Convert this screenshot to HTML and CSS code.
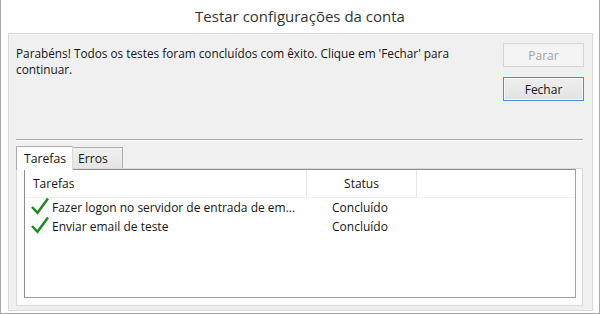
FILE: index.html
```html
<!DOCTYPE html>
<html lang="pt">
<head>
<meta charset="utf-8">
<title>Testar configurações da conta</title>
<link rel="stylesheet" href="styles.css">
</head>
<body>
<div class="window">
  <div class="title">Testar configurações da conta</div>
  <div class="panel">
    <div class="top">
      <p class="message">Parabéns! Todos os testes foram concluídos com êxito. Clique em 'Fechar' para continuar.</p>
      <div class="buttons">
        <button class="btn btn-disabled" disabled>Parar</button>
        <button class="btn btn-default">Fechar</button>
      </div>
    </div>
    <div class="separator"></div>
    <div class="tabs">
      <div class="tab tab-active">Tarefas</div>
      <div class="tab">Erros</div>
    </div>
    <div class="tabpage">
      <div class="listbox">
        <div class="header">
          <div class="col col-task">Tarefas</div>
          <div class="col col-status">Status</div>
          <div class="col col-rest"></div>
        </div>
        <div class="row">
          <div class="cell cell-task">
            <svg class="check" width="18" height="18" viewBox="0 0 18 18"><path d="M1 10 L6.5 15.8 L17 1.5" fill="none" stroke="#1f8a1f" stroke-width="2.5" stroke-linejoin="miter" stroke-linecap="butt"/></svg>
            <span>Fazer logon no servidor de entrada de em...</span>
          </div>
          <div class="cell cell-status">Concluído</div>
        </div>
        <div class="row">
          <div class="cell cell-task">
            <svg class="check" width="18" height="18" viewBox="0 0 18 18"><path d="M1 10 L6.5 15.8 L17 1.5" fill="none" stroke="#1f8a1f" stroke-width="2.5" stroke-linejoin="miter" stroke-linecap="butt"/></svg>
            <span>Enviar email de teste</span>
          </div>
          <div class="cell cell-status">Concluído</div>
        </div>
      </div>
    </div>
  </div>
</div>
</body>
</html>
```

FILE: styles.css
```css
* { box-sizing: border-box; }
html, body { margin: 0; padding: 0; background: #ffffff; }
body {
  font-family: "Segoe UI", "Open Sans", "Noto Sans", sans-serif;
  font-size: 11.8px;
  color: #151515;
}
.window {
  width: 600px;
  height: 314px;
  background: #ffffff;
  border: 1px solid #a8a8a8;
  border-top: none;
  display: flex;
  flex-direction: column;
}
.title {
  height: 33px;
  line-height: 33px;
  text-align: center;
  font-size: 15px;
  color: #333333;
  padding-bottom: 1px;
}
.panel {
  margin: 0 6px 0 7px;
  height: 278px;
  background: #f0f0f0;
  border: 1px solid #dadada;
  display: flex;
  flex-direction: column;
}
.top {
  height: 105px;
  display: flex;
  padding: 9px 8px 0 7px;
}
.message {
  flex: 1;
  margin: 0;
  padding-top: 2px;
  line-height: 16px;
  padding-right: 20px;
}
.buttons {
  width: 81px;
  display: flex;
  flex-direction: column;
  gap: 10px;
}
.btn {
  font-family: inherit;
  font-size: 12px;
  width: 81px;
  height: 24px;
  padding: 0;
  border-radius: 0;
  outline: none;
}
.btn-disabled {
  background: #f4f4f4;
  border: 1px solid #d5d5d5;
  color: #a2a2a2;
}
.btn-default {
  height: 24px;
  background: linear-gradient(#eeeeee, #e3e3e3);
  border: 1px solid #4d8fd0;
  box-shadow: inset 0 0 0 1px #f4f8fc;
  color: #151515;
}
.separator {
  margin: 0 9px 0 7px;
  height: 2px;
  border-top: 1px solid #a9a9a9;
  border-bottom: 1px solid #ffffff;
}
.tabs {
  margin: 3px 0 0 7px;
  height: 25px;
  display: flex;
  align-items: flex-end;
  position: relative;
  z-index: 1;
}
.tab {
  height: 21px;
  padding: 0 9px 0 5px;
  width: 50px;
  border: 1px solid #acacac;
  border-bottom: none;
  border-left: none;
  background: linear-gradient(#f0f0f0, #e5e5e5);
  font-size: 12.2px;
  line-height: 21px;
  margin-bottom: 1px;
}
.tab-active {
  width: 57px;
  height: 24px;
  border-left: 1px solid #acacac;
  border-right: 1px solid #d9d9d9;
  background: #ffffff;
  line-height: 23px;
  padding: 0 0 0 7px;
  margin-bottom: -1px;
}
.tabpage {
  margin: -1px 9px 0 7px;
  height: 138px;
  background: #fbfbfb;
  border: 1px solid #d9d9d9;
  padding: 0 6px 7px 7px;
}
.listbox {
  height: 129px;
  background: #ffffff;
  border: 1px solid #8c8e94;
  border-right-color: #a0a0a0;
  border-bottom-color: #a0a0a0;
}
.header {
  height: 28px;
  display: flex;
  border-bottom: 1px solid #f0f0f0;
}
.col {
  line-height: 27px;
  font-size: 12px;
}
.col-task {
  width: 281px;
  padding-left: 8px;
}
.col-status {
  width: 111px;
  text-align: center;
  border-left: 1px solid #e5e9ee;
  border-right: 1px solid #e5e9ee;
}
.col-rest { flex: 1; }
.row {
  height: 19px;
  display: flex;
  align-items: center;
  font-size: 12px;
}
.cell-task {
  width: 307px;
  display: flex;
  align-items: center;
  padding-left: 6px;
  gap: 3px;
}
.check { flex: none; margin-top: -4px; }
.cell-status { padding-left: 0; }
```
